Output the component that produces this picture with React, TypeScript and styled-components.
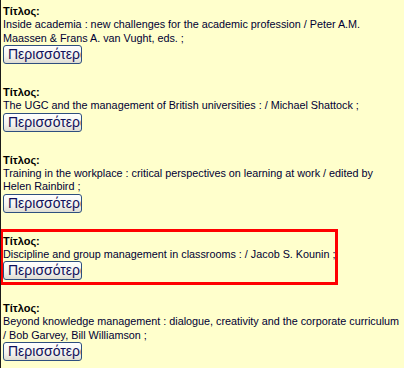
import styled, { createGlobalStyle } from 'styled-components';

type Record = {
  title: string;
  selected?: boolean;
};

const records: Record[] = [
  { title: 'Inside academia : new challenges for the academic profession / Peter A.M. Maassen & Frans A. van Vught, eds. ;' },
  { title: 'The UGC and the management of British universities : / Michael Shattock ;' },
  { title: 'Training in the workplace : critical perspectives on learning at work / edited by Helen Rainbird ;' },
  { title: 'Discipline and group management in classrooms : / Jacob S. Kounin ;', selected: true },
  { title: 'Beyond knowledge management : dialogue, creativity and the corporate curriculum / Bob Garvey, Bill Williamson ;' },
];

function App(): JSX.Element {
  return (
    <>
      <GlobalStyle />
      <Page>
        {records.map((r, i) => (
          <Entry key={i} $selected={r.selected}>
            <Label>Τίτλος:</Label>
            <Text>{r.title}</Text>
            <MoreButton type='button'>Περισσότερα</MoreButton>
          </Entry>
        ))}
      </Page>
    </>
  );
}

export default App;

const GlobalStyle = createGlobalStyle`
  html,
  body {
    margin: 0;
    padding: 0;
    background-color: #ffffcc;
  }
`;

const Page = styled.div`
  height: 368px;
  box-sizing: border-box;
  border-left: 1px solid #1a1a1a;
  padding: 2px 0 0 2px;
  font-family: 'Liberation Sans', Arial, sans-serif;
  font-size: 10.8px;
  color: #000033;
  overflow: hidden;
`;

const Entry = styled.div<{ $selected?: boolean }>`
  display: flex;
  flex-direction: column;
  align-items: flex-start;
  padding: 3px 0 2px;
  margin-bottom: 17px;
  width: ${(p) => (p.$selected ? 'fit-content' : 'auto')};
  outline: ${(p) => (p.$selected ? '3px solid #ff0000' : 'none')};
`;

const Label = styled.b`
  display: block;
  font-size: 11px;
  line-height: 13px;
  color: #000;
`;

const Text = styled.div`
  line-height: 13.5px;
`;

const MoreButton = styled.button`
  margin-top: 0;
  width: 79px;
  height: 19px;
  padding: 0 0 0 4px;
  box-sizing: border-box;
  overflow: hidden;
  white-space: nowrap;
  text-align: left;
  font-family: 'Liberation Sans', Arial, sans-serif;
  font-size: 14px;
  line-height: 17px;
  color: #10105a;
  border: 1px solid #2e4f7e;
  border-radius: 3px;
  background: linear-gradient(#ffffff, #f3f3ee 60%, #dedcd2);
  cursor: pointer;
`;
